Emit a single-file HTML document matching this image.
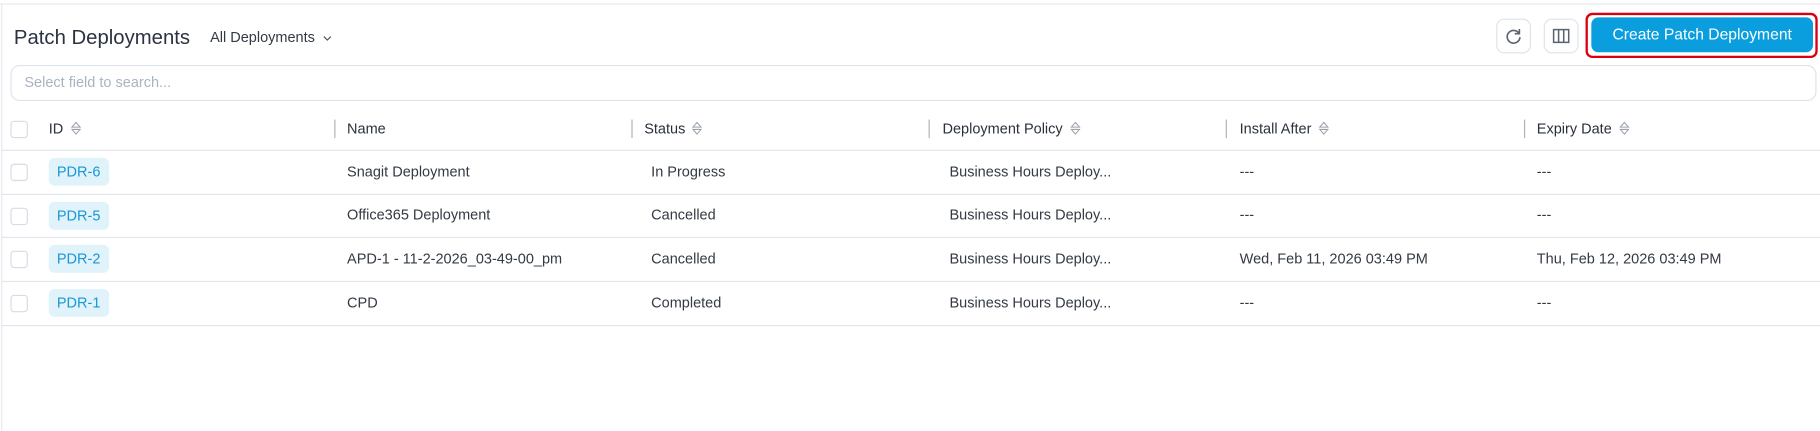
<!DOCTYPE html>
<html><head><meta charset="utf-8"><style>
*{box-sizing:border-box;margin:0;padding:0}
html,body{width:1820px;height:431px;overflow:hidden;background:#fff}
#w{position:absolute;left:0;top:0;width:1568px;height:371px;transform:scale(1.16071);transform-origin:0 0;font-family:"Liberation Sans",sans-serif;color:#2f3540}
.a{position:absolute;white-space:nowrap}
.hl{position:absolute;left:1px;right:0;height:1px;background:#e1e6ed}
.sep{position:absolute;width:1px;height:16px;top:103px;background:#aab1ba}
.cb{position:absolute;left:9px;width:15px;height:15px;border:1px solid #d6dce3;border-radius:3px;background:#fff}
.t{font-size:12.5px;color:#333a44}
.h{font-size:12.5px;color:#2a313b;top:104px}
.badge{position:absolute;left:42px;height:24px;border-radius:5px;background:#e0f2fa;color:#1a98d5;font-size:12.5px;line-height:24px;padding:0 7px}
.sort{display:inline-block;vertical-align:-2px;margin-left:6px}
</style></head><body><div id="w">
<div class="a" style="left:0;top:3px;width:1568px;height:1px;background:#e3e8ee"></div>
<div class="a" style="left:1px;top:3px;width:1px;height:368px;background:#e3e8ee"></div>
<div class="a" style="left:12px;top:22px;font-size:17.5px;color:#2b3340">Patch Deployments</div>
<div class="a" style="left:181px;top:25px;font-size:12.5px;color:#333a44">All Deployments <svg width="8" height="6" viewBox="0 0 8 6" style="margin-left:3px"><path d="M1 1.5l3 3 3-3" fill="none" stroke="#555" stroke-width="1"/></svg></div>
<div class="a" style="left:1289px;top:16px;width:30px;height:30px;border:1px solid #dde3ea;border-radius:7px">
<svg width="28" height="28" viewBox="0 0 28 28"><path d="M18.5 11.5A5.5 5.5 0 1 0 19.5 15" fill="none" stroke="#5a6370" stroke-width="1.4"/><path d="M19 8v4h-4" fill="none" stroke="#5a6370" stroke-width="1.4"/></svg></div>
<div class="a" style="left:1330px;top:16px;width:30px;height:30px;border:1px solid #dde3ea;border-radius:7px">
<svg width="28" height="28" viewBox="0 0 28 28"><rect x="7.5" y="8.5" width="13" height="11" fill="none" stroke="#5a6370" stroke-width="1.3"/><path d="M11.8 8.5v11M16.2 8.5v11" stroke="#5a6370" stroke-width="1.3"/></svg></div>
<div class="a" style="left:1366px;top:11px;width:200px;height:39px;border:2px solid #d9000f;border-radius:6px"></div>
<div class="a" style="left:1371px;top:15px;width:191px;height:30px;background:#0a9ede;border-radius:6px;color:#fff;font-size:13.5px;line-height:30px;text-align:center">Create Patch Deployment</div>
<div class="a" style="left:9px;top:56px;width:1556px;height:31px;border:1px solid #dde3ea;border-radius:8px"></div>
<div class="a" style="left:21px;top:64px;font-size:12.5px;color:#a9b3c0">Select field to search...</div>
<div class="cb" style="top:104px"></div>
<div class="a h" style="left:42px">ID<svg class="sort" width="9" height="13" viewBox="0 0 9 13"><path d="M1 5.5L4.5 1.5 8 5.5z M1 7.5L4.5 11.5 8 7.5z" fill="none" stroke="#9aa2ac" stroke-width="0.9"/></svg></div>
<div class="sep" style="left:288px"></div><div class="a h" style="left:299px">Name</div>
<div class="sep" style="left:544px"></div><div class="a h" style="left:555px">Status<svg class="sort" width="9" height="13" viewBox="0 0 9 13"><path d="M1 5.5L4.5 1.5 8 5.5z M1 7.5L4.5 11.5 8 7.5z" fill="none" stroke="#9aa2ac" stroke-width="0.9"/></svg></div>
<div class="sep" style="left:800px"></div><div class="a h" style="left:812px">Deployment Policy<svg class="sort" width="9" height="13" viewBox="0 0 9 13"><path d="M1 5.5L4.5 1.5 8 5.5z M1 7.5L4.5 11.5 8 7.5z" fill="none" stroke="#9aa2ac" stroke-width="0.9"/></svg></div>
<div class="sep" style="left:1056px"></div><div class="a h" style="left:1068px">Install After<svg class="sort" width="9" height="13" viewBox="0 0 9 13"><path d="M1 5.5L4.5 1.5 8 5.5z M1 7.5L4.5 11.5 8 7.5z" fill="none" stroke="#9aa2ac" stroke-width="0.9"/></svg></div>
<div class="sep" style="left:1313px"></div><div class="a h" style="left:1324px">Expiry Date<svg class="sort" width="9" height="13" viewBox="0 0 9 13"><path d="M1 5.5L4.5 1.5 8 5.5z M1 7.5L4.5 11.5 8 7.5z" fill="none" stroke="#9aa2ac" stroke-width="0.9"/></svg></div>
<div class="hl" style="top:129px"></div>
<div class="hl" style="top:167px"></div>
<div class="hl" style="top:204px"></div>
<div class="hl" style="top:242px"></div>
<div class="hl" style="top:280px"></div>

<div class="cb" style="top:141px"></div><div class="badge" style="top:136px">PDR-6</div>
<div class="a t" style="left:299px;top:141px">Snagit Deployment</div><div class="a t" style="left:561px;top:141px">In Progress</div><div class="a t" style="left:818px;top:141px">Business Hours Deploy...</div><div class="a t" style="left:1068px;top:141px">---</div><div class="a t" style="left:1324px;top:141px">---</div>

<div class="cb" style="top:179px"></div><div class="badge" style="top:174px">PDR-5</div>
<div class="a t" style="left:299px;top:178px">Office365 Deployment</div><div class="a t" style="left:561px;top:178px">Cancelled</div><div class="a t" style="left:818px;top:178px">Business Hours Deploy...</div><div class="a t" style="left:1068px;top:178px">---</div><div class="a t" style="left:1324px;top:178px">---</div>

<div class="cb" style="top:216px"></div><div class="badge" style="top:211px">PDR-2</div>
<div class="a t" style="left:299px;top:216px">APD-1 - 11-2-2026_03-49-00_pm</div><div class="a t" style="left:561px;top:216px">Cancelled</div><div class="a t" style="left:818px;top:216px">Business Hours Deploy...</div><div class="a t" style="left:1068px;top:216px">Wed, Feb 11, 2026 03:49 PM</div><div class="a t" style="left:1324px;top:216px">Thu, Feb 12, 2026 03:49 PM</div>

<div class="cb" style="top:254px"></div><div class="badge" style="top:249px">PDR-1</div>
<div class="a t" style="left:299px;top:254px">CPD</div><div class="a t" style="left:561px;top:254px">Completed</div><div class="a t" style="left:818px;top:254px">Business Hours Deploy...</div><div class="a t" style="left:1068px;top:254px">---</div><div class="a t" style="left:1324px;top:254px">---</div>
</div></body></html>
